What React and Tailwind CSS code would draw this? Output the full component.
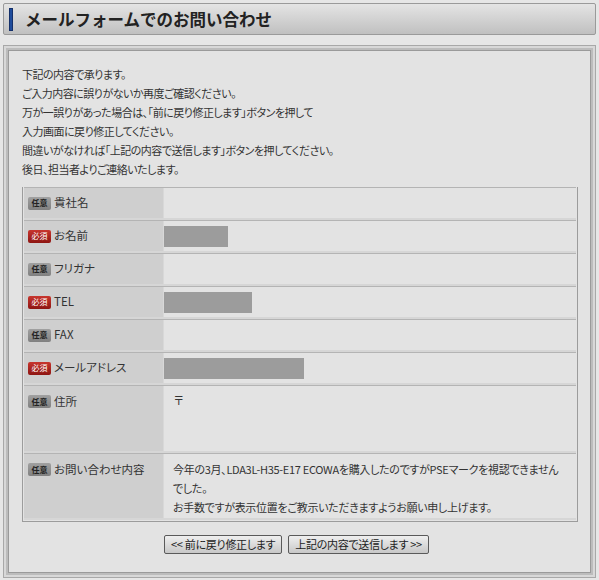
const jp = { fontFamily: '"Noto Sans CJK JP", "Liberation Sans", sans-serif' }

function Badge({ req }) {
  return req ? (
    <span className="inline-flex items-center justify-center w-[23px] h-[13px] rounded-[2px] bg-gradient-to-b from-[#c8362e] to-[#8e1512] text-white text-[8px] leading-none shrink-0">
      必須
    </span>
  ) : (
    <span className="inline-flex items-center justify-center w-[23px] h-[13px] rounded-[2px] bg-gradient-to-b from-[#a0a0a0] to-[#808080] text-[#222] text-[8px] font-bold leading-none shrink-0">
      任意
    </span>
  )
}

function Row({ req, label, h = 'h-[33px]', children, top }) {
  return (
    <div className={`flex ${h} border-t border-[#b4b4b4] border-b-[2px] border-b-[#d6d6d6]`}>
      <div className={`w-[139px] shrink-0 bg-[#cfcfcf] flex pl-[4px] ${top ? 'items-center' : ''}`}>
        <div className={`flex items-center gap-[3px] ${top ? '' : 'pt-[7px] self-start'}`}>
          <Badge req={req} />
          <span className="text-[11.5px] text-[#333]">{label}</span>
        </div>
      </div>
      <div className="flex-1 bg-[#e3e3e3] border-l border-[#d8d8d8]">{children}</div>
    </div>
  )
}

function Redact({ w }) {
  return <div className={`${w} h-[21px] bg-[#9c9c9c] mt-[5px]`} />
}

export default function App() {
  return (
    <div className="w-[599px] h-[580px] bg-[#e6e6e6] px-[3px] pt-[3px]" style={jp}>
      <div className="h-[32px] border border-[#9a9a9a] rounded-[2px] bg-gradient-to-b from-[#e4e4e4] via-[#d2d2d2] to-[#c0c0c0] flex items-center">
        <div className="w-[4px] h-[23px] bg-[#1f4c9c] ml-[5px] border border-[#14306a]" />
        <h1 className="ml-[12px] text-[16.5px] font-bold text-[#222]">メールフォームでのお問い合わせ</h1>
      </div>

      <div className="mt-[10px] h-[533px] border border-[#a8a8a8] bg-[#d8d8d8] p-[2px]">
        <div className="h-full border-[2px] border-[#bcbcbc]">
          <div className="h-full border border-[#9a9a9a] bg-[#e3e3e3] px-[13px] pt-[14px]">
            <div className="text-[11px] leading-[19px] tracking-[-0.5px] text-[#333] [font-feature-settings:'palt']">
              <p>下記の内容で承ります。</p>
              <p>ご入力内容に誤りがないか再度ご確認ください。</p>
              <p>万が一誤りがあった場合は、「前に戻り修正します」ボタンを押して</p>
              <p>入力画面に戻り修正してください。</p>
              <p>間違いがなければ「上記の内容で送信します」ボタンを押してください。</p>
              <p>後日、担当者よりご連絡いたします。</p>
            </div>

            <div className="mt-[8px] w-[556px] border border-[#9c9c9c] border-t-0 bg-[#e3e3e3] p-[1px] pt-0 [font-feature-settings:'palt']">
              <Row label="貴社名" top />
              <Row req label="お名前" top><Redact w="w-[64px]" /></Row>
              <Row label="フリガナ" top />
              <Row req label="TEL" top><Redact w="w-[88px]" /></Row>
              <Row label="FAX" top />
              <Row req label="メールアドレス" top><Redact w="w-[140px]" /></Row>
              <Row label="住所" h="h-[68px]">
                <div className="pt-[6px] pl-[10px] text-[11px] text-[#333]">〒</div>
              </Row>
              <Row label="お問い合わせ内容" h="h-[67px]">
                <div className="pt-[6px] pl-[9px] pr-[4px] text-[11px] leading-[19px] tracking-[-0.3px] text-[#333]">
                  今年の3月、LDA3L-H35-E17 ECOWAを購入したのですがPSEマークを視認できません
                  <br />
                  でした。
                  <br />
                  お手数ですが表示位置をご教示いただきますようお願い申し上げます。
                </div>
              </Row>
            </div>

            <div className="flex justify-center gap-[6px] mt-[13px] pr-[6px]">
              <button className="h-[19px] px-[6px] border border-[#5a5a5a] rounded-[2px] bg-gradient-to-b from-[#efefef] to-[#c8c8c8] text-[11px] text-[#222] leading-none tracking-[-0.3px] [font-feature-settings:'palt']">
                &lt;&lt; 前に戻り修正します
              </button>
              <button className="h-[19px] px-[6px] border border-[#5a5a5a] rounded-[2px] bg-gradient-to-b from-[#efefef] to-[#c8c8c8] text-[11px] text-[#222] leading-none tracking-[-0.3px] [font-feature-settings:'palt']">
                上記の内容で送信します &gt;&gt;
              </button>
            </div>
          </div>
        </div>
      </div>
    </div>
  )
}
